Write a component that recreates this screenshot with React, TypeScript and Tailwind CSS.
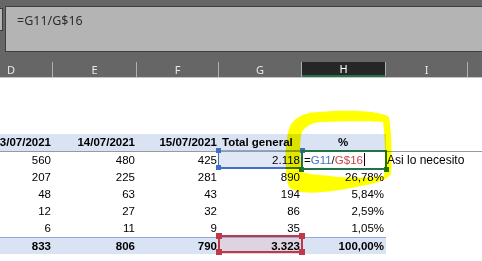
import React from "react";

const cols = "grid grid-cols-[83px_84px_82px_83px_84px_82px_83px] ml-[-30px] w-[581px]";

// J queda fuera de la vista, solo se ve el borde
const letters = ["D", "E", "F", "G", "H", "I", ""];

const rows = [
  ["560", "480", "425", "2.118"],
  ["207", "225", "281", "890", "26,78%"],
  ["48", "63", "43", "194", "5,84%"],
  ["12", "27", "32", "86", "2,59%"],
  ["6", "11", "9", "35", "1,05%"],
];

function Cell({ children, className = "" }: { children?: React.ReactNode; className?: string }) {
  return <div className={"h-[17px] leading-[17px] text-right pr-[2px] whitespace-nowrap " + className}>{children}</div>;
}

export default function App() {
  return (
    <div className="relative w-[482px] h-[261px] overflow-hidden bg-white font-['Liberation_Sans',Arial,sans-serif] text-black">
      {/* barra de fórmulas */}
      <div className="flex items-start h-[62px] pt-[6px] bg-[#666]">
        <div className="mt-[2px] w-[3px] h-[23px] shrink-0 bg-[#b4b4b4] border-y border-r border-[#3c3c3c]" />
        <div className="ml-[2px] flex-1 h-[46px] bg-[#b4b4b4] border-y border-l border-[#3f3f3f] pl-[11px] pt-[5px] font-['Noto_Sans',sans-serif] text-[12.5px] text-[#2e2e2e]">
          =G11/G$16
        </div>
      </div>

      {/* cabeceras de columna */}
      <div className={cols + " h-[16px] bg-[#666] border-b border-[#c4c4c4] font-['Noto_Sans',sans-serif] text-[11px] text-[#e8e8e8]"}>
        {letters.map((l, i) => (
          <div
            key={i}
            className={
              "flex items-center justify-center border-r border-[#b0b0b0] leading-none " +
              (l === "H" ? "bg-[#262626] text-white border-b-2 border-b-[#217346]" : "")
            }
          >
            {l}
          </div>
        ))}
      </div>

      <div className="h-[56px]" />

      {/* tabla dinámica */}
      <div className="text-[11.5px]">
        <div className={cols + " border-b border-[#9a9a9a] font-bold"}>
          <Cell className="bg-[#dae3f3]">13/07/2021</Cell>
          <Cell className="bg-[#dae3f3]">14/07/2021</Cell>
          <Cell className="bg-[#dae3f3]">15/07/2021</Cell>
          <Cell className="bg-[#dae3f3] !text-left pl-[3px]">Total general</Cell>
          <Cell className="bg-[#dae3f3] !text-center">%</Cell>
          <Cell />
          <Cell />
        </div>
        {rows.map((r, i) => (
          <div key={i} className={cols}>
            <Cell>{r[0]}</Cell>
            <Cell>{r[1]}</Cell>
            <Cell>{r[2]}</Cell>
            <Cell className={i === 0 ? "bg-[#e1e8f5]" : ""}>{r[3]}</Cell>
            {i === 0 ? (
              <Cell className="!text-left pl-[2px]">
                <span>=</span>
                <span className="text-[#4472c4]">G11</span>
                <span>/</span>
                <span className="text-[#c8414e]">G$16</span>
                <span className="inline-block w-px h-[13px] bg-black align-[-2px] ml-px" />
              </Cell>
            ) : (
              <Cell>{r[4]}</Cell>
            )}
            <Cell className="!text-left pl-[1px] overflow-visible text-[12px]">{i === 0 ? "Asi lo necesito" : ""}</Cell>
            <Cell />
          </div>
        ))}
        <div className={cols + " font-bold"}>
          <Cell className="bg-[#dae3f3] border-t border-[#8ea9db]">833</Cell>
          <Cell className="bg-[#dae3f3] border-t border-[#8ea9db]">806</Cell>
          <Cell className="bg-[#dae3f3] border-t border-[#8ea9db]">790</Cell>
          <Cell className="bg-[#ddd3e1] border-t border-[#8ea9db]">3.323</Cell>
          <Cell className="bg-[#dae3f3] border-t border-[#8ea9db]">100,00%</Cell>
          <Cell />
          <Cell />
        </div>
      </div>

      {/* referencia azul G11 */}
      <div className="absolute left-[218px] top-[150px] w-[85px] h-[19px] border border-[#3f6fc6] border-t-[#8aa3da] border-b-2" />
      <div className="absolute left-[216px] top-[148px] w-[5px] h-[5px] bg-[#3f6fc6]" />
      <div className="absolute left-[216px] top-[165px] w-[5px] h-[5px] bg-[#3f6fc6]" />
      <div className="absolute left-[300px] top-[148px] w-[5px] h-[5px] bg-[#3f6fc6]" />

      {/* referencia roja G16 */}
      <div className="absolute left-[218px] top-[235px] w-[85px] h-[18px] border-2 border-[#c0394b]" />
      <div className="absolute left-[216px] top-[233px] w-[6px] h-[6px] bg-[#c0394b]" />
      <div className="absolute left-[216px] top-[249px] w-[6px] h-[6px] bg-[#c0394b]" />
      <div className="absolute left-[299px] top-[233px] w-[6px] h-[6px] bg-[#c0394b]" />
      <div className="absolute left-[299px] top-[249px] w-[6px] h-[6px] bg-[#c0394b]" />

      {/* celda activa */}
      <div className="absolute left-[301px] top-[150px] w-[86px] h-[20px] border-2 border-[#217346]" />
      <div className="absolute left-[299px] top-[167px] w-[5px] h-[5px] bg-[#217346]" />
      <div className="absolute left-[384px] top-[167px] w-[5px] h-[5px] bg-[#217346]" />

      {/* marcador amarillo */}
      <svg className="absolute left-0 top-0 pointer-events-none mix-blend-multiply" width="482" height="261" viewBox="0 0 482 261">
        <path
          fillRule="evenodd"
          fill="#ffff00"
          d="M320 112 C342 110 378 110 389 117 C392 135 392 160 391 174 C385 183 362 186 340 190 C320 193 297 195 289 187 C284 172 284 138 291 124 C298 115 308 112 320 112 Z M322 122 C340 121 370 121 383 122 C385 138 386 160 384 176 C370 178 346 178 330 176 C318 175 308 174 302 172 C300 160 299 142 302 132 C306 126 313 122 322 122 Z"
        />
      </svg>
    </div>
  );
}
